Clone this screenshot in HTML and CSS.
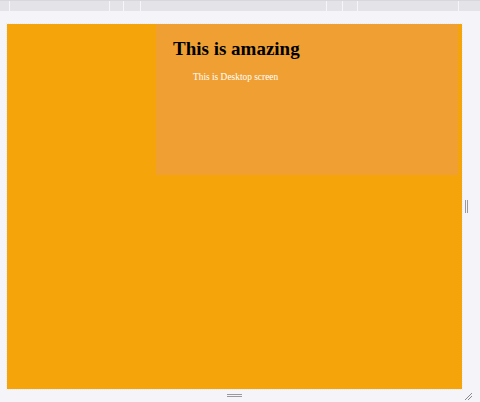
FILE: index.html
```html
<!DOCTYPE html>
<html>
<head>
<meta charset="utf-8">
<link rel="stylesheet" href="styles.css">
</head>
<body>
<div class="toolbar">
  <div class="seg w10"></div>
  <div class="seg w100"></div>
  <div class="seg w14"></div>
  <div class="seg w17"></div>
  <div class="seg w186"></div>
  <div class="seg w16"></div>
  <div class="seg w15"></div>
  <div class="seg w101"></div>
  <div class="seg last"></div>
</div>
<div class="stage">
  <div class="frame">
    <div class="card">
      <h1 class="title">This is amazing</h1>
      <p class="sub">This is Desktop screen</p>
    </div>
  </div>
  <div class="side">
    <div class="vhandle"></div>
  </div>
</div>
<div class="bottom">
  <div class="hhandle"></div>
  <svg class="corner" width="10" height="10" viewBox="0 0 10 10">
    <path d="M2 9 L9 2 M5 9 L9 5" stroke="#8a898e" stroke-width="1" fill="none"/>
  </svg>
</div>
</body>
</html>
```
FILE: styles.css
```css
html, body {
  margin: 0;
  padding: 0;
}
body {
  width: 480px;
  height: 402px;
  background: #f5f4f8;
  overflow: hidden;
  font-family: "Liberation Serif", "Times New Roman", serif;
}
.toolbar {
  display: flex;
  height: 10px;
  background: #e4e3e7;
  border-top: 1px solid #d8d7db;
}
.seg {
  height: 100%;
  border-right: 1px solid #f6f5f9;
  box-sizing: border-box;
}
.w10 { width: 10px; }
.w100 { width: 100px; }
.w14 { width: 14px; }
.w17 { width: 17px; }
.w186 { width: 186px; }
.w16 { width: 16px; }
.w15 { width: 15px; }
.w101 { width: 101px; }
.last { flex: 1; border-right: none; }

.stage {
  display: flex;
  padding-top: 13px;
  padding-left: 7px;
}
.frame {
  width: 455px;
  height: 365px;
  background: #f5a50a;
  outline: 1px dotted #ebeaee;
}
.card {
  margin-left: 149px;
  width: 302px;
  height: 151px;
  background: #f0a032;
  padding: 13px 0 0 17px;
  box-sizing: border-box;
}
.title {
  margin: 0;
  font-size: 19px;
  line-height: 24px;
  font-weight: bold;
  color: #000;
}
.sub {
  margin: 10px 0 0 20px;
  font-size: 9.4px;
  line-height: 12px;
  color: #fff;
}
.side {
  flex: 1;
  display: flex;
  align-items: center;
  padding-left: 3px;
}
.vhandle {
  width: 1px;
  height: 13px;
  border-left: 1px solid #9a999e;
  border-right: 1px solid #9a999e;
}
.bottom {
  position: relative;
  height: 13px;
  display: flex;
  justify-content: center;
  padding-left: 7px;
  width: 455px;
}
.hhandle {
  margin-top: 5px;
  width: 15px;
  height: 1px;
  border-top: 1px solid #9a999e;
  border-bottom: 1px solid #9a999e;
}
.corner {
  position: absolute;
  left: 463px;
  top: 2px;
}
```
